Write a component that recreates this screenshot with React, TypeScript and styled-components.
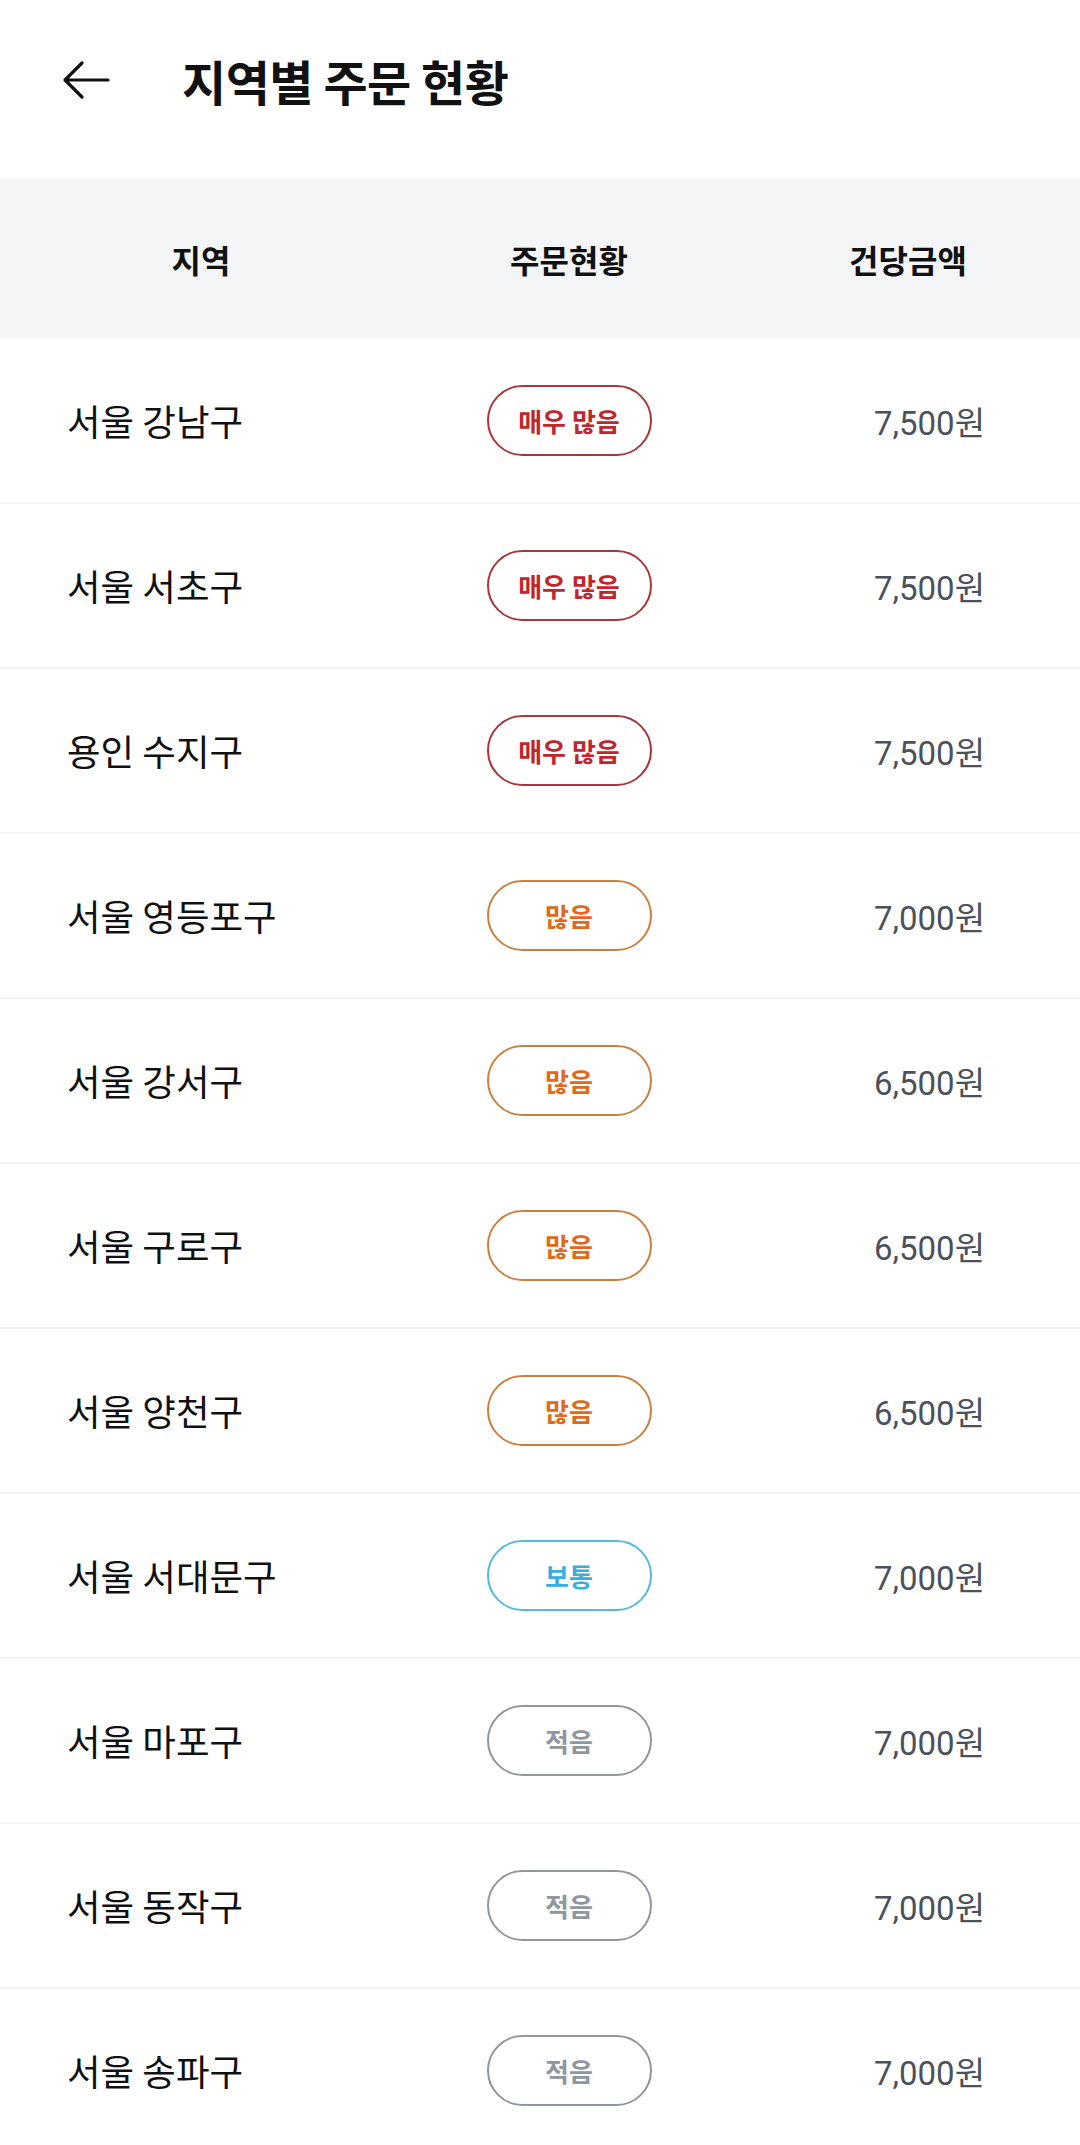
import React from 'react';
import styled, { createGlobalStyle } from 'styled-components';

type Level = 'veryHigh' | 'high' | 'normal' | 'low';

interface IRegionRow {
  region: string;
  level: Level;
  price: string;
}

const levelStyles: Record<Level, { label: string; color: string; border: string }> = {
  veryHigh: { label: '매우 많음', color: '#c0272d', border: '#a8363b' },
  high: { label: '많음', color: '#e06a1b', border: '#cc803f' },
  normal: { label: '보통', color: '#38ade0', border: '#55b8df' },
  low: { label: '적음', color: '#8e97a1', border: '#91969d' },
};

const rows: IRegionRow[] = [
  { region: '서울 강남구', level: 'veryHigh', price: '7,500원' },
  { region: '서울 서초구', level: 'veryHigh', price: '7,500원' },
  { region: '용인 수지구', level: 'veryHigh', price: '7,500원' },
  { region: '서울 영등포구', level: 'high', price: '7,000원' },
  { region: '서울 강서구', level: 'high', price: '6,500원' },
  { region: '서울 구로구', level: 'high', price: '6,500원' },
  { region: '서울 양천구', level: 'high', price: '6,500원' },
  { region: '서울 서대문구', level: 'normal', price: '7,000원' },
  { region: '서울 마포구', level: 'low', price: '7,000원' },
  { region: '서울 동작구', level: 'low', price: '7,000원' },
  { region: '서울 송파구', level: 'low', price: '7,000원' },
];

const GlobalStyle = createGlobalStyle`
  body {
    margin: 0;
    background: #ffffff;
    font-family: Roboto, "Noto Sans CJK KR", "Noto Sans", sans-serif;
    color: #111111;
  }
`;

const Page = styled.div`
  width: 1080px;
  background: #ffffff;
`;

const TopBar = styled.header`
  height: 179px;
  display: flex;
  align-items: center;
  padding: 0 0 20px 62px;
  gap: 72px;
  box-sizing: border-box;
`;

const BackButton = styled.button`
  border: none;
  background: none;
  padding: 0;
  width: 48px;
  height: 40px;
  display: flex;
  align-items: center;
  cursor: pointer;
`;

const Title = styled.h1`
  margin: 0;
  font-family: "Noto Sans CJK KR", sans-serif;
  font-size: 48px;
  font-weight: 700;
  letter-spacing: -0.5px;
  color: #111111;
`;

const Grid = styled.div`
  display: grid;
  grid-template-columns: 402px 334px 1fr;
  align-items: center;
`;

const HeaderRow = styled(Grid)`
  height: 160px;
  background: #f4f5f7;
`;

const HeaderCell = styled.div`
  text-align: center;
  font-family: "Noto Sans CJK KR", sans-serif;
  font-size: 32px;
  font-weight: 700;
  color: #111111;
`;

const Row = styled(Grid)`
  height: 165px;
  box-sizing: border-box;
  border-bottom: 2px solid #f1f1f2;
`;

const RegionCell = styled.div`
  padding-left: 67px;
  font-family: "Noto Sans CJK KR", sans-serif;
  font-size: 36.5px;
  color: #111111;
`;

const PillCell = styled.div`
  display: flex;
  justify-content: center;
`;

const Pill = styled.span<{ $color: string; $border: string }>`
  width: 165px;
  height: 71px;
  box-sizing: border-box;
  border-radius: 36px;
  border: 2px solid ${(p) => p.$border};
  color: ${(p) => p.$color};
  display: flex;
  align-items: center;
  justify-content: center;
  font-family: "Noto Sans CJK KR", sans-serif;
  font-size: 26px;
  font-weight: 700;
`;

const PriceCell = styled.div`
  text-align: right;
  padding-right: 95px;
  font-size: 33px;
  color: #4b515b;
`;

const ArrowIcon = () => (
  <svg width="48" height="40" viewBox="0 0 48 40" fill="none">
    <path
      d="M46 20H4M20 3L3 20L20 37"
      stroke="#111111"
      strokeWidth="3.2"
      strokeLinecap="round"
      strokeLinejoin="round"
    />
  </svg>
);

export default function App() {
  return (
    <Page>
      <GlobalStyle />
      <TopBar>
        <BackButton aria-label="뒤로">
          <ArrowIcon />
        </BackButton>
        <Title>지역별 주문 현황</Title>
      </TopBar>
      <HeaderRow>
        <HeaderCell>지역</HeaderCell>
        <HeaderCell>주문현황</HeaderCell>
        <HeaderCell>건당금액</HeaderCell>
      </HeaderRow>
      {rows.map((row) => {
        const lv = levelStyles[row.level];
        return (
          <Row key={row.region}>
            <RegionCell>{row.region}</RegionCell>
            <PillCell>
              <Pill $color={lv.color} $border={lv.border}>
                {lv.label}
              </Pill>
            </PillCell>
            <PriceCell>{row.price}</PriceCell>
          </Row>
        );
      })}
    </Page>
  );
}
